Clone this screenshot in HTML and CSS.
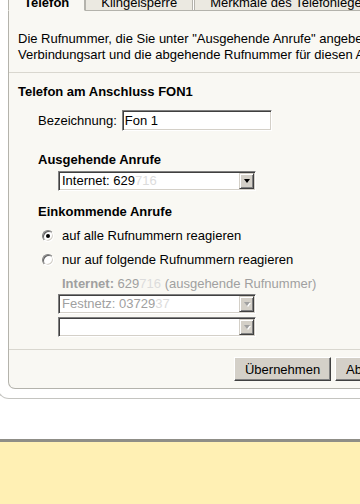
FILE: index.html
```html
<!DOCTYPE html>
<html lang="de">
<head>
    <meta charset="UTF-8">
    <meta name="viewport" content="width=device-width, initial-scale=1.0">
    <title>Telefon am Anschluss FON1</title>
    <link rel="stylesheet" href="styles.css">
</head>
<body>
    <div class="rahmen">
        <div class="tabs">
            <div class="tab aktiv">Telefon</div>
            <div class="tab">Klingelsperre</div>
            <div class="tab">Merkmale des Telefoniegeräts</div>
        </div>

        <div class="karte">
            <div class="hinweis">
                Die Rufnummer, die Sie unter "Ausgehende Anrufe" angeben, wird für ausgehende Gespräche verwendet. Wählen Sie die<br>
                Verbindungsart und die abgehende Rufnummer für diesen Anschluss aus.
            </div>

            <div class="block">
                <h2>Telefon am Anschluss FON1</h2>
                <div class="zeile">
                    <label for="bezeichnung">Bezeichnung:</label>
                    <input type="text" id="bezeichnung" value="Fon 1">
                </div>

                <h3>Ausgehende Anrufe</h3>
                <div class="auswahl">
                    <span class="wert">Internet: 629<span class="verdeckt">716</span></span>
                    <span class="pfeil"></span>
                </div>

                <h3>Einkommende Anrufe</h3>
                <div class="option"><span class="radio an"></span>auf alle Rufnummern reagieren</div>
                <div class="option"><span class="radio"></span>nur auf folgende Rufnummern reagieren</div>
                <div class="info"><b>Internet:</b> 629<span class="verdeckt">716</span> (ausgehende Rufnummer)</div>
                <div class="auswahl aus">
                    <span class="wert">Festnetz: 03729<span class="verdeckt">37</span></span>
                    <span class="pfeil"></span>
                </div>
                <div class="auswahl aus">
                    <span class="wert"></span>
                    <span class="pfeil"></span>
                </div>
            </div>

            <div class="knoepfe">
                <button type="button">Übernehmen</button>
                <button type="button">Abbrechen</button>
            </div>
        </div>
    </div>

    <div class="fuss"></div>
</body>
</html>
```

FILE: styles.css
```css
html, body {
    overflow: hidden;
}

body {
    margin: 0;
    background-color: #ffffff;
    color: #000000;
    font: 13px/16px "Liberation Sans", Arial, sans-serif;
}

.rahmen {
    width: 442px;
    margin: -6px 0 0 -3px;
    padding: 0 10px 9px 10px;
    border-left: 1px solid #c4c4c0;
    border-bottom: 1px solid #c4c4c0;
    border-bottom-left-radius: 12px;
}

/* Reiter */
.tabs {
    display: flex;
    border-bottom: 1px solid #b4b3ac;
}

.tab {
    padding: 0 15px;
    line-height: 15px;
    white-space: nowrap;
    background-color: #ebe9e1;
    border: 1px solid #b4b3ac;
    margin: 0 1px -1px 0;
}

.tab.aktiv {
    font-weight: bold;
    background-color: #f9f8f3;
    border-bottom-color: #f9f8f3;
    margin-right: 0;
}

/* Inhalt */
.karte {
    width: 422px;
    box-sizing: border-box;
    background-color: #f9f8f3;
    border-left: 1px solid #b4b3ac;
    border-right: 1px solid #b4b3ac;
    border-bottom: 1px solid #b4b3ac;
    border-bottom-left-radius: 7px;
}

.hinweis {
    padding: 20px 9px 9px;
    white-space: nowrap;
    border-bottom: 1px solid #d9d7cf;
}

.block {
    padding: 11px 9px 12px;
    border-bottom: 1px solid #d9d7cf;
}

h2, h3 {
    margin: 0;
    font-size: 13px;
    line-height: 16px;
    font-weight: bold;
}

h3 {
    margin: 13px 0 0 20px;
}

.zeile {
    display: flex;
    align-items: center;
    gap: 5px;
    margin: 10px 0 21px;
    padding-left: 20px;
}

.zeile input {
    width: 150px;
    height: 21px;
    box-sizing: border-box;
    margin: 0;
    padding: 0 2px;
    font: 13px "Liberation Sans", Arial, sans-serif;
    color: #000;
    background: #fff;
    border: 1px solid;
    border-color: #808080 #ffffff #ffffff #808080;
    box-shadow: inset 1px 1px #404040, inset -1px -1px #d4d0c8;
    outline: none;
}

/* Auswahlfelder */
.auswahl {
    display: flex;
    width: 198px;
    height: 20px;
    box-sizing: border-box;
    margin: 3px 0 0 40px;
    background: #ffffff;
    border: 1px solid;
    border-color: #808080 #ffffff #ffffff #808080;
    box-shadow: inset 1px 1px #404040, inset -1px -1px #d4d0c8;
    padding: 1px;
}

.auswahl .wert {
    flex: 1;
    padding-left: 2px;
    white-space: nowrap;
    overflow: hidden;
}

.auswahl .pfeil {
    width: 15px;
    box-sizing: border-box;
    background-color: #d4d0c8;
    border: 1px solid;
    border-color: #d4d0c8 #404040 #404040 #d4d0c8;
    box-shadow: inset 1px 1px #ffffff, inset -1px -1px #808080;
    display: flex;
    align-items: center;
    justify-content: center;
}

.auswahl .pfeil::after {
    content: "";
    border-left: 3.5px solid transparent;
    border-right: 3.5px solid transparent;
    border-top: 4px solid #000000;
}

.auswahl.aus .wert {
    color: #a0a0a0;
}

.auswahl.aus .pfeil::after {
    border-top-color: #a0a0a0;
    filter: drop-shadow(1px 1px 0 #ffffff);
}

.verdeckt {
    color: #dcdcdc;
}

/* Optionen */
.option {
    display: flex;
    align-items: center;
    margin-top: 8px;
    padding-left: 24px;
}

.radio {
    width: 12px;
    height: 12px;
    box-sizing: border-box;
    margin-right: 8px;
    border-radius: 50%;
    background: #ffffff;
    border: 1px solid;
    border-color: #808080 #ffffff #ffffff #808080;
    box-shadow: inset 1px 1px #606060, inset -1px -1px #d4d0c8;
    display: flex;
    align-items: center;
    justify-content: center;
}

.radio.an::after {
    content: "";
    width: 4px;
    height: 4px;
    border-radius: 50%;
    background: #000000;
}

.info {
    margin-top: 8px;
    padding-left: 44px;
    color: #a0a0a0;
}

.info + .auswahl {
    margin-top: 2px;
}

/* Knoepfe */
.knoepfe {
    display: flex;
    justify-content: flex-end;
    gap: 4px;
    padding: 7px 9px;
}

.knoepfe button {
    height: 24px;
    margin: 0;
    padding: 0 10px;
    font: 13px "Liberation Sans", Arial, sans-serif;
    color: #000;
    background-color: #d4d0c8;
    border: 1px solid;
    border-color: #ffffff #404040 #404040 #ffffff;
    box-shadow: inset -1px -1px #808080;
}

.fuss {
    margin-top: 40px;
    height: 80px;
    background-color: #fff0b4;
    border-top: 3px solid #8f8e87;
}
```
